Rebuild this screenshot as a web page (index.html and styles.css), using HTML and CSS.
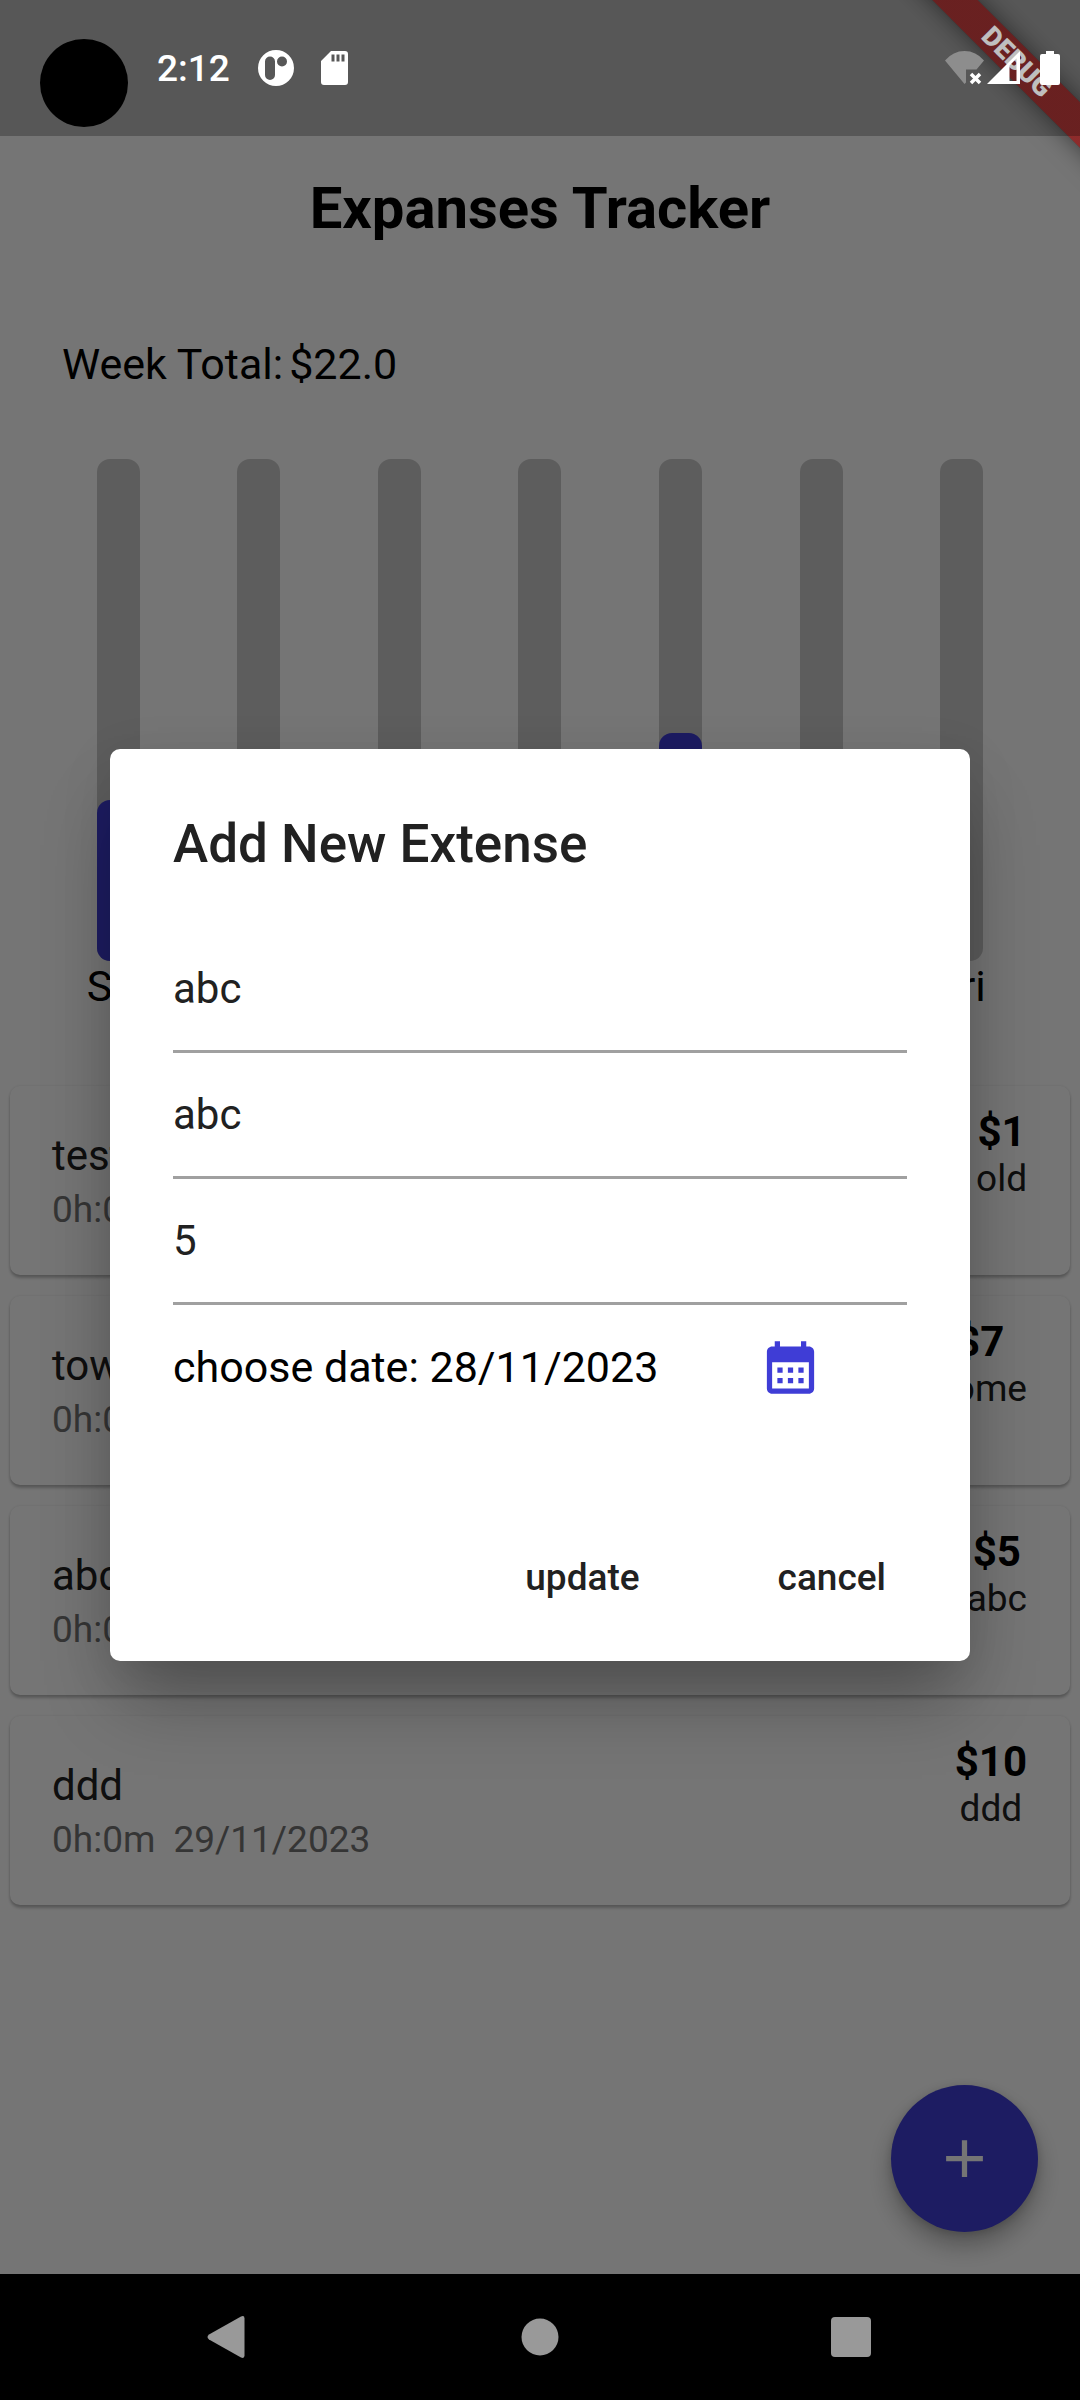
FILE: index.html
```html
<!DOCTYPE html>
<html lang="en">
<head>
<meta charset="utf-8">
<meta name="viewport" content="width=device-width, initial-scale=1">
<title>Expanses Tracker</title>
<link rel="stylesheet" href="styles.css">
</head>
<body>
<div class="screen">
  <main class="app">
    <header class="app-bar"><h1>Expanses Tracker</h1></header>
    <p class="week-total"><span>Week Total:</span><span>$22.0</span></p>
    <section class="chart" aria-label="Spending by day">
      <div class="day"><div class="bar"><div class="bar-fill" style="height: 32%"></div></div><span>Sat</span></div>
      <div class="day"><div class="bar"></div><span>Sun</span></div>
      <div class="day"><div class="bar"></div><span>Mon</span></div>
      <div class="day"><div class="bar"></div><span>Tue</span></div>
      <div class="day"><div class="bar"><div class="bar-fill" style="height: 45.5%"></div></div><span>Wed</span></div>
      <div class="day"><div class="bar"></div><span>Thu</span></div>
      <div class="day"><div class="bar"></div><span>Fri</span></div>
    </section>
    <ul class="expenses">
      <li class="card">
        <div class="card-main"><span class="name">test</span><span class="when"><span>0h:0m</span><span>29/11/2023</span></span></div>
        <div class="card-side"><strong>$1</strong><span>old</span></div>
      </li>
      <li class="card">
        <div class="card-main"><span class="name">tow</span><span class="when"><span>0h:0m</span><span>29/11/2023</span></span></div>
        <div class="card-side"><strong>$7</strong><span>home</span></div>
      </li>
      <li class="card">
        <div class="card-main"><span class="name">abc</span><span class="when"><span>0h:0m</span><span>28/11/2023</span></span></div>
        <div class="card-side"><strong>$5</strong><span>abc</span></div>
      </li>
      <li class="card">
        <div class="card-main"><span class="name">ddd</span><span class="when"><span>0h:0m</span><span>29/11/2023</span></span></div>
        <div class="card-side"><strong>$10</strong><span>ddd</span></div>
      </li>
    </ul>
    <button class="fab" type="button" aria-label="Add expense">
      <svg class="icon" viewBox="0 0 24 24"><path d="M19 13h-6v6h-2v-6H5v-2h6V5h2v6h6v2z"/></svg>
    </button>
  </main>

  <div class="barrier">
    <form class="dialog" role="dialog" aria-labelledby="dialog-title">
      <h2 id="dialog-title">Add New Extense</h2>
      <input type="text" aria-label="Title" value="abc">
      <input type="text" aria-label="Category" value="abc">
      <input type="text" aria-label="Amount" value="5">
      <div class="date-row">
        <span>choose date: 28/11/2023</span>
        <button class="icon-button" type="button" aria-label="Pick a date">
          <svg class="icon" viewBox="0 0 24 24"><path d="M19 4h-1V2h-2v2H8V2H6v2H5c-1.11 0-1.99.9-1.99 2L3 20c0 1.1.89 2 2 2h14c1.1 0 2-.9 2-2V6c0-1.1-.9-2-2-2zm0 16H5V10h14v10zM9 14H7v-2h2v2zm4 0h-2v-2h2v2zm4 0h-2v-2h2v2zm-8 4H7v-2h2v2zm4 0h-2v-2h2v2zm4 0h-2v-2h2v2z"/></svg>
        </button>
      </div>
      <div class="actions">
        <button type="button">update</button>
        <button type="button">cancel</button>
      </div>
    </form>
  </div>

  <div class="banner-corner"><div class="banner">DEBUG</div></div>

  <div class="status-bar">
    <div class="status-group">
      <span class="camera"></span>
      <time>2:12</time>
      <svg class="status-app" viewBox="0 0 36 38"><path fill-rule="evenodd" d="M18 1a18 18 0 1 0 0 36a18 18 0 1 0 0-36zM12 7.500a5 5 0 0 1 5 5v13.500a5 5 0 0 1-10 0v-13.500a5 5 0 0 1 5-5zM24 7.500a5 5 0 1 1 0 10a5 5 0 1 1 0-10z"/></svg>
      <svg class="status-sd" viewBox="0 0 27 34"><path fill-rule="evenodd" d="M10 0h14a3 3 0 0 1 3 3v28a3 3 0 0 1-3 3H3a3 3 0 0 1-3-3V10zM10.500 3.500v7h3v-7zM15.500 3.500v7h3v-7zM20.500 3.500v7h3v-7z"/></svg>
    </div>
    <div class="status-group">
      <svg class="status-wifi" viewBox="0 0 40 34"><path fill="#8d8d8d" d="M0 9.500Q8 0 19.500 0T39 9.500L31.500 18.500H21V31.500L19.500 33z"/><path fill="none" stroke="#fff" stroke-width="3.500" d="M26 23l9 9m0-9l-9 9"/></svg>
      <svg class="status-signal" viewBox="0 0 33 34"><path fill-rule="evenodd" d="M0 33L33 0V33zM22.500 14.500V30H29.500V7.500z"/></svg>
      <svg class="status-battery" viewBox="0 0 20 34"><path d="M6 0h8v3h4a2 2 0 0 1 2 2v27a2 2 0 0 1-2 2H2a2 2 0 0 1-2-2V5a2 2 0 0 1 2-2h4z"/></svg>
    </div>
  </div>

  <nav class="nav-bar" aria-label="System navigation">
    <button type="button" aria-label="Back"><svg viewBox="0 0 44 44"><path d="M34 1.500Q37.500 0 37.500 3.500V40.500Q37.500 44 34 42.500L2 24.500Q-1 22 2 19.500z"/></svg></button>
    <button type="button" aria-label="Home"><svg viewBox="0 0 44 44"><circle cx="22" cy="22" r="18.500"/></svg></button>
    <button type="button" aria-label="Recents"><svg viewBox="0 0 44 44"><rect x="2" y="2" width="40" height="40" rx="4"/></svg></button>
  </nav>
</div>
</body>
</html>
```
FILE: styles.css
```css
* {
  box-sizing: border-box;
}

body {
  margin: 0;
  background: #fff;
  color: #000;
  font-family: Roboto, sans-serif;
  font-size: 43px;
  line-height: 50px;
}

h1, h2, p, ul {
  margin: 0;
  padding: 0;
}

button {
  border: 0;
  padding: 0;
  background: none;
  font: inherit;
}

.icon {
  display: block;
  width: 63px;
  height: 63px;
  fill: currentColor;
}

.screen {
  position: relative;
  display: flex;
  flex-direction: column;
  min-height: 100vh;
  overflow: hidden;
}

/* App content */
.app {
  position: relative;
  flex: 1;
  padding: 136px 0 42px;
}

.app-bar {
  display: flex;
  justify-content: center;
  padding: 47px 0 50px;
}

h1 {
  font-size: 58px;
  font-weight: 700;
  line-height: 50px;
}

.week-total {
  display: flex;
  gap: 6px;
  padding: 56px 62px 70px;
}

.chart {
  display: grid;
  grid-template-columns: repeat(7, 1fr);
  padding: 0 48px 75px;
}

.day {
  display: flex;
  flex-direction: column;
  align-items: center;
}

.bar {
  display: flex;
  align-items: flex-end;
  width: 43px;
  height: 502px;
  border-radius: 13px;
  background: #cbcbcb;
}

.bar-fill {
  width: 100%;
  border-radius: 13px;
  background: #3f3dd6;
}

.expenses {
  display: flex;
  flex-direction: column;
  gap: 21px;
  padding: 0 10px;
  list-style: none;
}

.card {
  display: flex;
  justify-content: space-between;
  padding: 0 43px 0 42px;
  border-radius: 10px;
  background: #fff;
  box-shadow: 0 3px 3px rgba(0, 0, 0, .24), 0 0 3px rgba(0, 0, 0, .1);
}

.card-main {
  display: flex;
  flex-direction: column;
  padding: 42px 0 39px;
}

.name {
  font-size: 42px;
  line-height: 56px;
  color: #212121;
}

.when {
  display: flex;
  gap: 18px;
  font-size: 37px;
  line-height: 52px;
  color: #757575;
}

.card-side {
  display: flex;
  flex-direction: column;
  align-items: center;
  padding-top: 22px;
  font-size: 37px;
  line-height: 46px;
  color: #212121;
}

.card-side strong {
  font-size: 42px;
  line-height: 48px;
  color: #000;
}

.fab {
  position: absolute;
  right: 42px;
  bottom: 42px;
  display: grid;
  place-items: center;
  width: 147px;
  height: 147px;
  border-radius: 50%;
  background: #3f3dd6;
  color: #fff;
  box-shadow: 0 14px 24px rgba(0, 0, 0, .28), 0 2px 8px rgba(0, 0, 0, .16);
}

/* Dialog over the dimmed app */
.barrier {
  position: absolute;
  inset: 0;
  display: flex;
  align-items: center;
  justify-content: center;
  padding: 136px 110px 126px;
  background: rgba(0, 0, 0, .54);
}

.dialog {
  width: 100%;
  padding: 63px 63px 20px;
  border-radius: 10px;
  background: #fff;
  box-shadow: 0 48px 72px -12px rgba(0, 0, 0, .3), 0 12px 56px rgba(0, 0, 0, .08);
}

h2 {
  padding-bottom: 51px;
  font-size: 53px;
  font-weight: 500;
  line-height: 64px;
  color: #212121;
}

.dialog input {
  display: block;
  width: 100%;
  height: 126px;
  padding: 0;
  border: 0;
  border-bottom: 3px solid #a0a0a0;
  border-radius: 0;
  background: none;
  font: inherit;
  font-size: 42px;
  color: #212121;
}

.date-row {
  display: flex;
  align-items: center;
  justify-content: space-between;
  padding-right: 54px;
}

.icon-button {
  display: grid;
  place-items: center;
  width: 126px;
  height: 124px;
  color: #3f3dd6;
}

.actions {
  display: flex;
  justify-content: flex-end;
  gap: 12px;
  margin-right: -42px;
  padding-top: 86px;
}

.actions button {
  height: 126px;
  padding: 0 63px;
  font-size: 37px;
  font-weight: 500;
  color: #212121;
}

/* Debug ribbon */
.banner-corner {
  position: absolute;
  top: 0;
  right: 0;
  width: 260px;
  height: 260px;
  overflow: hidden;
}

.banner {
  position: absolute;
  top: 46px;
  right: -87px;
  width: 300px;
  height: 32px;
  background: linear-gradient(rgba(183, 28, 28, .63), rgba(183, 28, 28, .63)), rgba(0, 0, 0, .4);
  box-shadow: 0 0 24px rgba(0, 0, 0, .5);
  color: #fff;
  font-size: 27px;
  font-weight: 900;
  line-height: 32px;
  text-align: center;
  transform: rotate(45deg);
}

/* System bars */
.status-bar {
  position: absolute;
  inset: 0 0 auto;
  display: flex;
  justify-content: space-between;
  height: 136px;
  padding: 0 20px 0 40px;
  background: rgba(0, 0, 0, .25);
  color: #fff;
}

.status-group {
  display: flex;
  align-items: center;
}

.status-bar svg {
  fill: #fff;
}

.camera {
  align-self: flex-end;
  width: 88px;
  height: 88px;
  margin-bottom: 9px;
  border-radius: 50%;
  background: #000;
}

.status-bar time {
  margin: 0 28px 0 29px;
  padding-top: 2px;
  font-size: 37px;
  font-weight: 500;
}

.status-app {
  width: 36px;
  height: 38px;
  margin-right: 27px;
}

.status-sd {
  width: 27px;
  height: 34px;
}

.status-wifi {
  width: 40px;
  height: 34px;
  margin-right: 2px;
}

.status-signal {
  width: 33px;
  height: 34px;
  margin-right: 20px;
}

.status-battery {
  width: 20px;
  height: 34px;
}

.nav-bar {
  position: relative;
  display: flex;
  align-items: center;
  justify-content: center;
  gap: 267px;
  height: 126px;
  background: #000;
}

.nav-bar svg {
  display: block;
  width: 44px;
  height: 44px;
  fill: #999;
}
```
